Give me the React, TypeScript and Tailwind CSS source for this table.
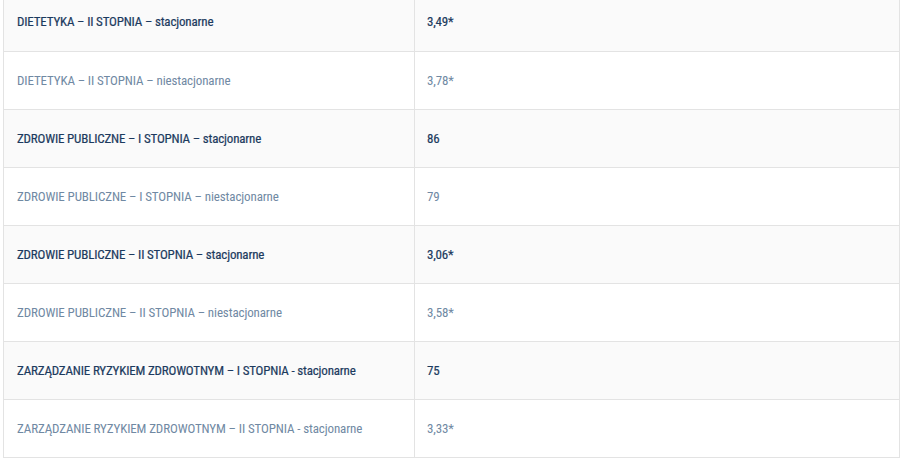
import React from 'react';

type Row = { name: string; score: string; strong: boolean };

const rows: Row[] = [
  { name: 'DIETETYKA – II STOPNIA – stacjonarne', score: '3,49*', strong: true },
  { name: 'DIETETYKA – II STOPNIA – niestacjonarne', score: '3,78*', strong: false },
  { name: 'ZDROWIE PUBLICZNE – I STOPNIA – stacjonarne', score: '86', strong: true },
  { name: 'ZDROWIE PUBLICZNE – I STOPNIA – niestacjonarne', score: '79', strong: false },
  { name: 'ZDROWIE PUBLICZNE – II STOPNIA – stacjonarne', score: '3,06*', strong: true },
  { name: 'ZDROWIE PUBLICZNE – II STOPNIA – niestacjonarne', score: '3,58*', strong: false },
  { name: 'ZARZĄDZANIE RYZYKIEM ZDROWOTNYM – I STOPNIA - stacjonarne', score: '75', strong: true },
  { name: 'ZARZĄDZANIE RYZYKIEM ZDROWOTNYM – II STOPNIA - stacjonarne', score: '3,33*', strong: false },
];

export default function App() {
  return (
    <div className="w-[907px] h-[464px] overflow-hidden bg-white font-['Roboto_Condensed',_'Liberation_Sans',_sans-serif] text-[13px] tracking-[-0.12px]">
      <div className="ml-[3px] -mt-[8px] w-[897px] border border-[#e3e3e3]">
        {rows.map((r, i) => (
          <div
            key={i}
            className={`flex h-[58px] items-center ${i > 0 ? 'border-t border-[#e3e3e3]' : ''} ${
              i % 2 === 0 ? 'bg-[#fafafa]' : 'bg-white'
            } ${r.strong ? 'text-[#1c3a5e] tracking-[-0.18px] [-webkit-text-stroke:0.2px_#1c3a5e]' : 'text-[#7089a3]'}`}
          >
            <div className="w-[411px] h-full flex items-center px-[13px] border-r border-[#e3e3e3]">{r.name}</div>
            <div className="flex-1 px-[12px]">{r.score}</div>
          </div>
        ))}
      </div>
    </div>
  );
}
